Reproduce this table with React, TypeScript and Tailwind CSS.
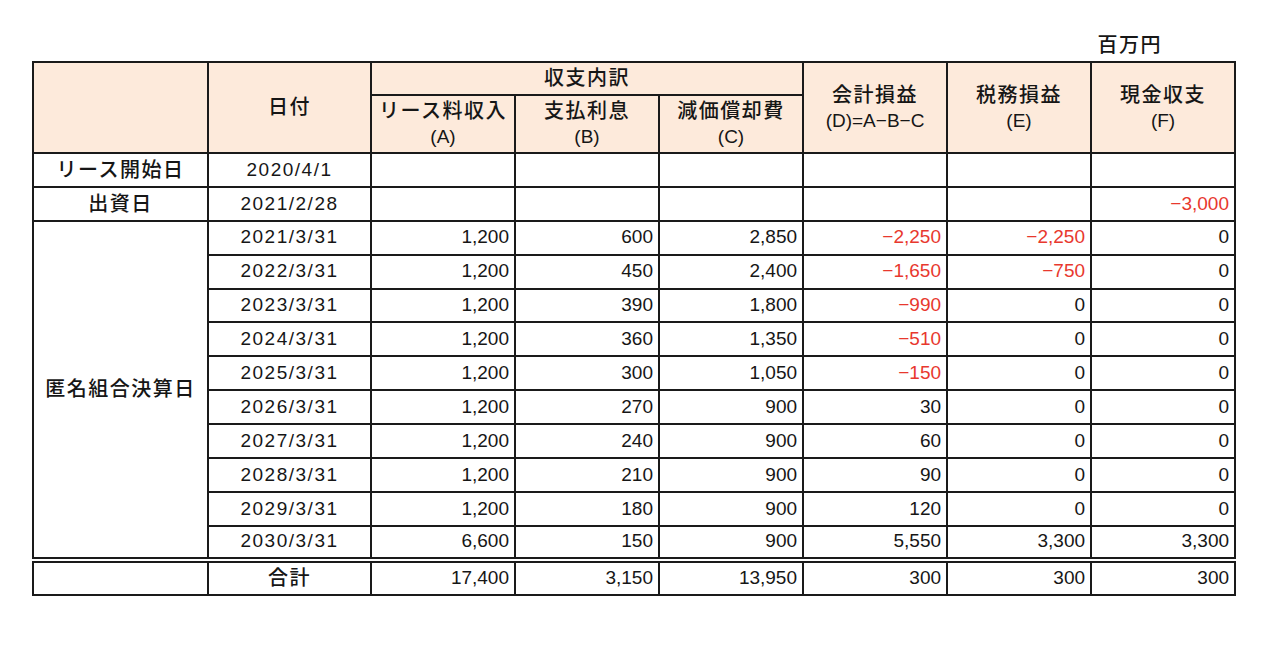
const rows: string[][] = [
  ["2021/3/31", "1,200", "600", "2,850", "−2,250", "−2,250", "0"],
  ["2022/3/31", "1,200", "450", "2,400", "−1,650", "−750", "0"],
  ["2023/3/31", "1,200", "390", "1,800", "−990", "0", "0"],
  ["2024/3/31", "1,200", "360", "1,350", "−510", "0", "0"],
  ["2025/3/31", "1,200", "300", "1,050", "−150", "0", "0"],
  ["2026/3/31", "1,200", "270", "900", "30", "0", "0"],
  ["2027/3/31", "1,200", "240", "900", "60", "0", "0"],
  ["2028/3/31", "1,200", "210", "900", "90", "0", "0"],
  ["2029/3/31", "1,200", "180", "900", "120", "0", "0"],
  ["2030/3/31", "6,600", "150", "900", "5,550", "3,300", "3,300"],
];

const cell = "border-2 border-[#1a1a1a] p-0";
const head = `${cell} bg-[#fdeadb] text-center align-middle leading-[25px] font-medium`;
const jp = "text-[20px] tracking-[1.5px]";
const num = `${cell} text-right pr-[5px] align-middle`;
const date = `${cell} text-center align-middle tracking-[1.5px]`;
const label = `${cell} text-center align-middle font-medium ${jp}`;
const total = "border-t-[6px] [border-top-style:double]";

function Num({ v }: { v: string }) {
  const red = v.startsWith("−");
  return <td className={`${num} ${red ? "text-[#e8382e]" : ""}`}>{v}</td>;
}

function Head({ t, sub }: { t: string; sub: string }) {
  return (
    <>
      <span className={jp}>{t}</span>
      <br />
      <span className="font-normal">{sub}</span>
    </>
  );
}

export default function App() {
  return (
    <div className="w-[1280px] h-[670px] bg-white pt-[33px] pl-[32px] font-['Liberation_Sans','Noto_Sans_CJK_JP',sans-serif] text-[19px] text-[#161616]">
      <div className={`w-[1202px] flex justify-end pr-[72px] h-[24px] leading-[24px] mb-[4px] font-medium ${jp}`}>
        百万円
      </div>

      <table className="table-fixed border-collapse w-[1202px]">
        <colgroup>
          <col className="w-[175px]" />
          <col className="w-[163px]" />
          <col className="w-[144px]" />
          <col className="w-[144px]" />
          <col className="w-[144px]" />
          <col className="w-[144px]" />
          <col className="w-[144px]" />
          <col className="w-[144px]" />
        </colgroup>
        <thead>
          <tr className="h-[33px]">
            <th rowSpan={2} className={head}></th>
            <th rowSpan={2} className={head}>
              <span className={jp}>日付</span>
            </th>
            <th colSpan={3} className={head}>
              <span className={jp}>収支内訳</span>
            </th>
            <th rowSpan={2} className={head}>
              <Head t="会計損益" sub="(D)=A−B−C" />
            </th>
            <th rowSpan={2} className={head}>
              <Head t="税務損益" sub="(E)" />
            </th>
            <th rowSpan={2} className={head}>
              <Head t="現金収支" sub="(F)" />
            </th>
          </tr>
          <tr className="h-[58px]">
            <th className={head}>
              <Head t="リース料収入" sub="(A)" />
            </th>
            <th className={head}>
              <Head t="支払利息" sub="(B)" />
            </th>
            <th className={head}>
              <Head t="減価償却費" sub="(C)" />
            </th>
          </tr>
        </thead>
        <tbody>
          <tr className="h-[33.9px]">
            <td className={label}>リース開始日</td>
            <td className={date}>2020/4/1</td>
            <td className={num}></td>
            <td className={num}></td>
            <td className={num}></td>
            <td className={num}></td>
            <td className={num}></td>
            <td className={num}></td>
          </tr>
          <tr className="h-[33.9px]">
            <td className={label}>出資日</td>
            <td className={date}>2021/2/28</td>
            <td className={num}></td>
            <td className={num}></td>
            <td className={num}></td>
            <td className={num}></td>
            <td className={num}></td>
            <Num v="−3,000" />
          </tr>
          {rows.map((r, i) => (
            <tr key={r[0]} className="h-[33.9px]">
              {i === 0 && (
                <td rowSpan={rows.length} className={label}>
                  匿名組合決算日
                </td>
              )}
              <td className={date}>{r[0]}</td>
              {r.slice(1).map((v, j) => (
                <Num key={j} v={v} />
              ))}
            </tr>
          ))}
          <tr className="h-[35px]">
            <td className={`${label} ${total}`}></td>
            <td className={`${label} ${total}`}>合計</td>
            {["17,400", "3,150", "13,950", "300", "300", "300"].map((v, j) => (
              <td key={j} className={`${num} ${total}`}>
                {v}
              </td>
            ))}
          </tr>
        </tbody>
      </table>
    </div>
  );
}
